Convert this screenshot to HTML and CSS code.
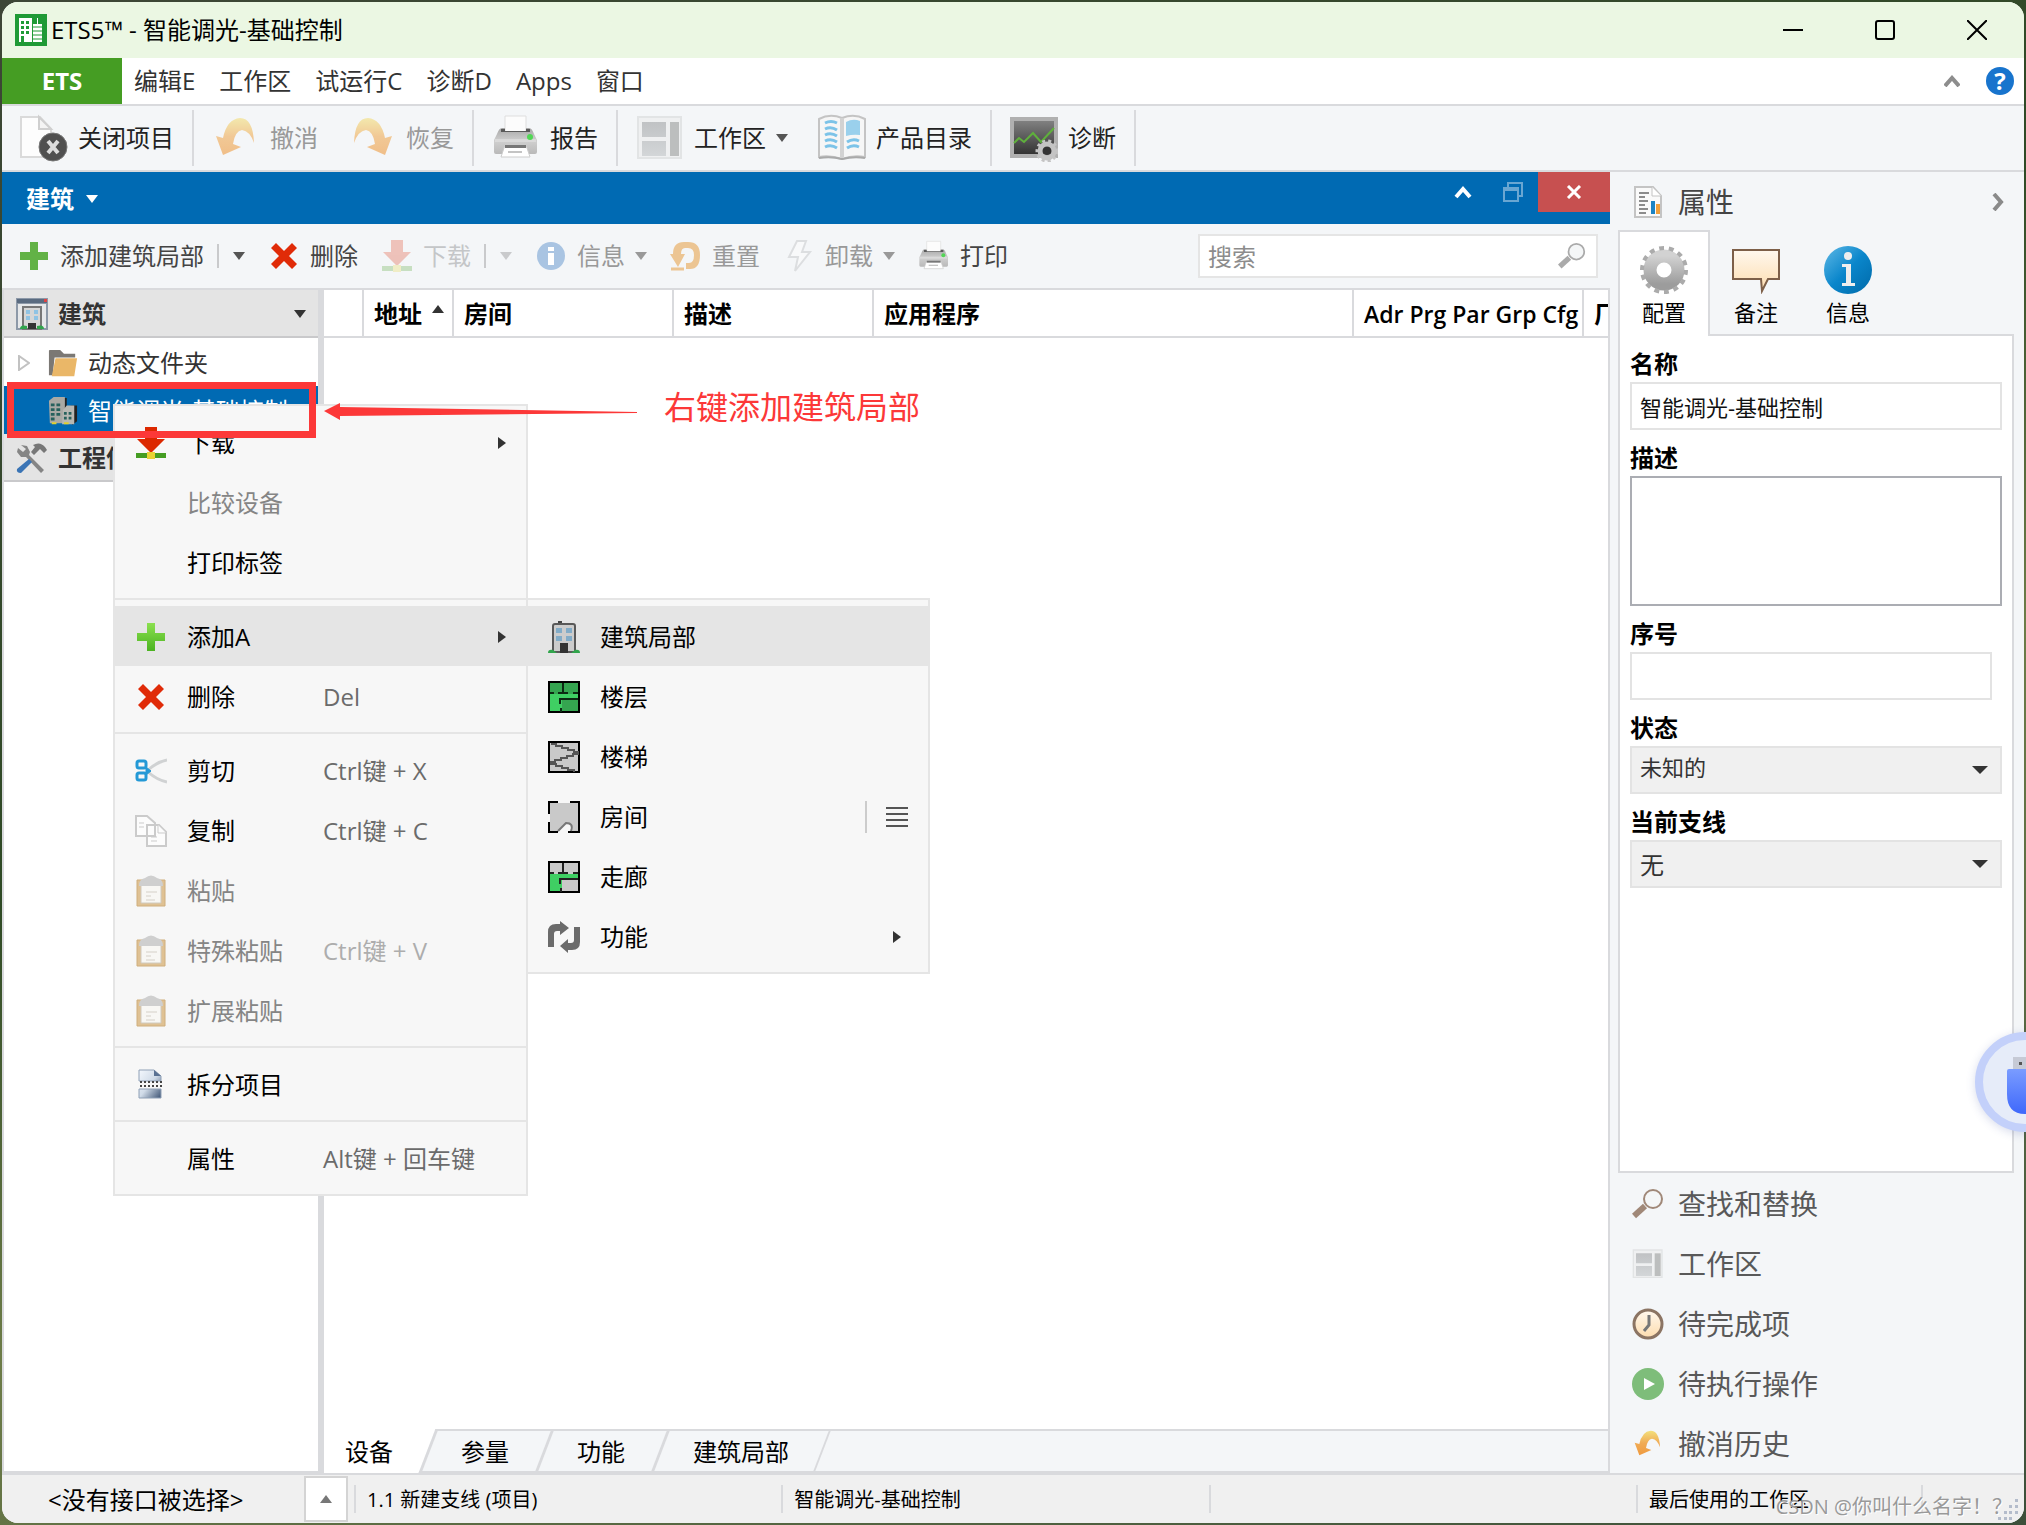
FILE: index.html
```html
<!DOCTYPE html>
<html lang="zh-CN">
<head>
    <meta charset="UTF-8">
    <meta name="viewport" content="width=device-width, initial-scale=1.0">
    <title>ETS5™ - 智能调光-基础控制</title>
    <link rel="stylesheet" href="styles.css">
</head>
<body>
    <!-- Shared icons -->
    <svg class="icon-defs" width="0" height="0" aria-hidden="true">
        <defs>
            <linearGradient id="g-orange" x1="0" y1="0" x2="0" y2="1"><stop offset="0" stop-color="#f3e07c"/><stop offset=".5" stop-color="#f0ab55"/><stop offset="1" stop-color="#ef9a3f"/></linearGradient>
            <linearGradient id="g-gray" x1="0" y1="0" x2="0" y2="1"><stop offset="0" stop-color="#d2d2d2"/><stop offset="1" stop-color="#9c9c9c"/></linearGradient>
            <linearGradient id="g-printer" x1="0" y1="0" x2="0" y2="1"><stop offset="0" stop-color="#a8a8a8"/><stop offset=".5" stop-color="#cfcfcf"/><stop offset="1" stop-color="#b9b9b9"/></linearGradient>
            <linearGradient id="g-pane" x1="0" y1="0" x2="0" y2="1"><stop offset="0" stop-color="#c0c2c4"/><stop offset="1" stop-color="#d3d6d8"/></linearGradient>
            <linearGradient id="g-blue" x1="0" y1="0" x2="1" y2="1"><stop offset="0" stop-color="#5fb9e6"/><stop offset=".5" stop-color="#0a86cb"/><stop offset="1" stop-color="#0069a8"/></linearGradient>
            <linearGradient id="g-peach" x1="0" y1="0" x2="0" y2="1"><stop offset="0" stop-color="#fff8ee"/><stop offset="1" stop-color="#fddcae"/></linearGradient>
            <linearGradient id="g-green" x1="0" y1="0" x2="0" y2="1"><stop offset="0" stop-color="#8be04f"/><stop offset="1" stop-color="#4bb321"/></linearGradient>
            <linearGradient id="g-dark" x1="0" y1="0" x2="0" y2="1"><stop offset="0" stop-color="#858585"/><stop offset="1" stop-color="#2f2f2f"/></linearGradient>
            <linearGradient id="g-split" x1="0" y1="0" x2="1" y2="1"><stop offset="0" stop-color="#f4f8fd"/><stop offset=".5" stop-color="#d0dbe8"/><stop offset="1" stop-color="#3d5373"/></linearGradient>
            <linearGradient id="g-usb" x1="0" y1="0" x2="0" y2="1"><stop offset="0" stop-color="#7a9cff"/><stop offset="1" stop-color="#3f68fb"/></linearGradient>
        </defs>
        <symbol id="i-down" viewBox="0 0 12 8"><path d="M0 0h12L6 8z"/></symbol>
        <symbol id="i-right" viewBox="0 0 8 12"><path d="M0 0v12l8-6z"/></symbol>
        <symbol id="i-undo" viewBox="0 0 48 48"><path d="M4 22l7 2Q15 5 28 4q13 0 14 25-4-12-12-13-7 1-9 14l8 3-18 8z" fill="url(#g-orange)"/></symbol>
        <symbol id="i-printer" viewBox="0 0 48 48">
            <path d="M13 2h21v18H13z" fill="#fcfcfc" stroke="#dedede"/>
            <path d="M10 14h3v4h21v-4h3q3 0 5 6l3 6v12q0 2-2 2H4q-2 0-2-2V26l3-6q2-6 5-6z" fill="url(#g-printer)"/>
            <path d="M9 15h4v2h21v-2h4v3H9z" fill="#5a5a5a"/>
            <path d="M3 25h41v3H3z" fill="#e3e3e3" opacity=".6"/>
            <circle cx="38" cy="23" r="3" fill="#52d656"/>
            <path d="M13 31h21l4 12H9z" fill="#fff" stroke="#ccc"/>
            <path d="M13 31h21v3H13z" fill="#777"/>
            <path d="M16 38h14" stroke="#c4c4c4" stroke-width="2"/>
        </symbol>
        <symbol id="i-workspace" viewBox="0 0 48 48">
            <path d="M2 3h43v41H2z" fill="#eff0f1" stroke="#e2e4e5" stroke-width="2"/>
            <path d="M6 8h24v15H6zM6 27h24v15H6z" fill="url(#g-pane)"/>
            <path d="M34 8h9v34h-9z" fill="#bcbebe"/>
        </symbol>
        <symbol id="i-delete" viewBox="0 0 32 32"><path d="M3 8l5-5 8 8 8-8 5 5-8 8 8 8-5 5-8-8-8 8-5-5 8-8z"/></symbol>
        <symbol id="i-plus" viewBox="0 0 32 32"><path d="M12 2h8v10h10v8H20v10h-8V20H2v-8h10z"/></symbol>
        <symbol id="i-download" viewBox="0 0 32 32">
            <path d="M10 0h12v12h8L16 26 2 12h8z" fill="#dc2800"/>
            <path d="M1 26h30v5H1z" fill="#459d23"/><path d="M12 25h8v7h-8z" fill="#e8d335"/>
        </symbol>
        <symbol id="i-glass" viewBox="0 0 32 32">
            <path d="M2 28l11-10" stroke="currentColor" stroke-width="6"/>
            <circle cx="21" cy="11" r="9" fill="#f4f6f7" stroke="currentColor" stroke-width="2"/>
        </symbol>
        <symbol id="i-house" viewBox="0 0 32 32">
            <path d="M10 0h4v3h-4z" fill="#444"/>
            <path d="M5 31V5q0-2 2-2h18q2 0 2 2v26z" fill="#ccc" stroke="#595959" stroke-width="2"/>
            <path d="M8 7h6v5H8zM18 7h6v5h-6zM8 15h6v5H8zM18 15h6v5h-6z" fill="#82acc8"/>
            <path d="M12 22h8v10h-8z" fill="#333"/>
            <path d="M0 32q0-4 5-3l4 3zM32 32q0-4-5-3l-4 3z" fill="#31a54c"/>
        </symbol>
        <symbol id="i-paste" viewBox="0 0 32 32">
            <path d="M2 5h28v26H2z" fill="#dfc193" stroke="#cfae7c"/>
            <path d="M6 9h20v19H6z" fill="#f8f7f4" stroke="#d0cabf"/>
            <path d="M4 11Q4 4 10 3q6-5 12 0 6 1 6 8z" fill="#cfcfcf"/>
            <path d="M11 17h11M11 21h5M11 25h9" stroke="#d5d0c8"/>
        </symbol>
    </svg>

    <div class="window">
        <header class="title-bar">
            <svg class="app-icon" viewBox="0 0 32 32">
                <path d="M0 0h32v32H0z" fill="#1f9a36"/>
                <path d="M4 4h13v24H4z" fill="#fff"/>
                <path d="M6 7h3v3H6zM11 7h3v3h-3zM6 12h3v3H6zM11 12h3v3h-3zM6 17h3v3H6zM11 17h3v3h-3zM6 22h3v6H6z" fill="#1f9a36"/>
                <path d="M22 4h1v6h4v18h-9V10h4z" fill="#fff"/>
                <path d="M18 13h10M18 17h10M18 21h10M18 25h10" stroke="#1f9a36"/>
            </svg>
            <h1 class="title">ETS5™ - 智能调光-基础控制</h1>
            <div class="window-buttons">
                <button aria-label="最小化"><svg width="20" height="20"><path d="M0 10h20" stroke="#000" stroke-width="2"/></svg></button>
                <button aria-label="最大化"><svg width="20" height="20"><rect x="1" y="1" width="18" height="18" rx="2" fill="none" stroke="#000" stroke-width="2"/></svg></button>
                <button aria-label="关闭"><svg width="20" height="20"><path d="M0 0l20 20M20 0L0 20" stroke="#000" stroke-width="2"/></svg></button>
            </div>
        </header>

        <nav class="menu-bar">
            <button class="ets-btn">ETS</button>
            <button>编辑E</button>
            <button>工作区</button>
            <button>试运行C</button>
            <button>诊断D</button>
            <button>Apps</button>
            <button>窗口</button>
            <div class="menu-right">
                <button aria-label="折叠"><svg width="16" height="12" viewBox="0 0 16 12"><path d="M1 11l7-8 7 8" fill="none" stroke="#8d8d8d" stroke-width="4"/></svg></button>
                <button class="help-btn">?</button>
            </div>
        </nav>

        <div class="ribbon">
            <div class="ribbon-group">
                <button>
                    <svg class="icon-lg" viewBox="0 0 48 48">
                        <path d="M1 3h19l11 12v28H1z" fill="#fdfdfd" stroke="#dadada" stroke-width="2"/>
                        <path d="M19 3v12h12z" fill="#f4f4f4" stroke="#cfcfcf" stroke-width="2"/>
                        <circle cx="33" cy="33" r="14" fill="#505050" stroke="#777"/>
                        <path d="M28 27l10 12M38 27L28 39" stroke="#ddd" stroke-width="4"/>
                    </svg>
                    关闭项目
                </button>
            </div>
            <div class="ribbon-group">
                <button disabled><svg class="icon-lg faded"><use href="#i-undo"/></svg>撤消</button>
                <button disabled><svg class="icon-lg faded flipped"><use href="#i-undo"/></svg>恢复</button>
            </div>
            <div class="ribbon-group">
                <button><svg class="icon-lg"><use href="#i-printer"/></svg>报告</button>
            </div>
            <div class="ribbon-group">
                <button><svg class="icon-lg"><use href="#i-workspace"/></svg>工作区<svg class="arrow"><use href="#i-down"/></svg></button>
                <button>
                    <svg class="icon-lg" viewBox="0 0 48 48">
                        <path d="M1 5Q12-1 24 4q12-5 23 1v38q-12-2-23 2-12-4-23-2z" fill="#f6f6f6" stroke="#c4c4c4" stroke-width="2"/>
                        <path d="M1 44q12-2 23 1 12-3 23-1" fill="none" stroke="#a9a9a9" stroke-width="2"/>
                        <path d="M24 4v40" stroke="#d2d2d2" stroke-width="4"/>
                        <path d="M7 9q6-3 12 0M7 15q6-3 12 1M7 21q6-3 12 1M7 27q6-3 12 1M7 33q6-3 12 1M29 28q6-4 12-1M29 34q6-4 12-1" fill="none" stroke="#7cc3e8" stroke-width="3"/>
                        <path d="M28 8q7-4 14-1v14q-7-1-14 1z" fill="#9ad0ec"/>
                    </svg>
                    产品目录
                </button>
            </div>
            <div class="ribbon-group">
                <button>
                    <svg class="icon-lg" viewBox="0 0 48 48">
                        <path d="M2 5h44v37H2z" fill="url(#g-dark)" stroke="#b0b0b0" stroke-width="4"/>
                        <path d="M4 29l5-5 5 4 9-9 8 9 13-14" fill="none" stroke="#5fb03c" stroke-width="2"/>
                        <circle cx="37" cy="37" r="7" fill="none" stroke="#c4c4c4" stroke-width="5"/>
                        <circle cx="37" cy="37" r="10" fill="none" stroke="#c4c4c4" stroke-width="3" stroke-dasharray="3 3"/>
                        <circle cx="37" cy="37" r="4" fill="#333"/>
                    </svg>
                    诊断
                </button>
            </div>
        </div>

        <div class="workspace">
            <main class="main-panel">
                <div class="panel-title">
                    <button class="panel-name">建筑<svg class="arrow"><use href="#i-down"/></svg></button>
                    <div class="panel-buttons">
                        <button aria-label="折叠"><svg width="18" height="14" viewBox="0 0 18 14"><path d="M2 12l7-8 7 8" fill="none" stroke="#fff" stroke-width="4"/></svg></button>
                        <button aria-label="还原"><svg width="20" height="20" viewBox="0 0 20 20" fill="none" stroke="#69a6d2" stroke-width="2"><path d="M1 6h14v13H1zM1 8h14M5 5V1h14v13h-4"/></svg></button>
                        <button class="panel-close" aria-label="关闭面板"><svg width="16" height="14" viewBox="0 0 16 14"><path d="M2 1l12 12M14 1L2 13" stroke="#fff" stroke-width="3"/></svg></button>
                    </div>
                </div>

                <div class="tool-bar">
                    <button><svg class="icon fill-green"><use href="#i-plus"/></svg>添加建筑局部<span class="split"></span><svg class="arrow"><use href="#i-down"/></svg></button>
                    <button><svg class="icon fill-red"><use href="#i-delete"/></svg>删除</button>
                    <button class="lighter" disabled><svg class="icon"><use href="#i-download"/></svg>下载<span class="split"></span><svg class="arrow"><use href="#i-down"/></svg></button>
                    <button disabled>
                        <svg class="icon" viewBox="0 0 32 32"><circle cx="16" cy="16" r="14" fill="#a9c4e2"/><path d="M13 7h6v4h-6zM13 13h6v12h-6z" fill="#fff"/></svg>
                        信息<svg class="arrow"><use href="#i-down"/></svg>
                    </button>
                    <button disabled>
                        <svg class="icon" viewBox="0 0 32 32"><path d="M3 14Q3 2 14 2h4q12 0 12 13 0 14-10 14h-4v-6h3q5 0 5-8 0-7-6-7h-3q-4 0-4 6h4L8 27 0 14z" fill="#ecc593"/><path d="M1 29h13" stroke="#ecc593" stroke-width="3"/></svg>
                        重置
                    </button>
                    <button disabled>
                        <svg class="icon" viewBox="0 0 32 32"><path d="M14 1h9l-4 11h8L12 31l3-14H6z" fill="#f8f9fa" stroke="#dcdee0" stroke-width="2"/></svg>
                        卸载<svg class="arrow"><use href="#i-down"/></svg>
                    </button>
                    <button><svg class="icon"><use href="#i-printer"/></svg>打印</button>
                    <div class="search">
                        <input type="search" placeholder="搜索" aria-label="搜索">
                        <svg class="search-icon"><use href="#i-glass"/></svg>
                    </div>
                </div>

                <div class="panel-body">
                    <aside class="tree">
                        <div class="tree-row tree-head">
                            <svg class="icon" viewBox="0 0 32 32">
                                <path d="M0 0h32v32H0z" fill="#8d99a8"/><path d="M2 6h28v24H2z" fill="#e6e8ea"/>
                                <path d="M1 1h30v4H1z" fill="#5a6b80"/><path d="M28 1h3v3h-3z" fill="#d44"/>
                                <path d="M7 31V9h18v22z" fill="#d6d6d6" stroke="#777" stroke-width="2"/>
                                <path d="M10 12h4v4h-4zM18 12h4v4h-4zM10 18h4v4h-4zM18 18h4v4h-4z" fill="#8fc3e4"/>
                                <path d="M12 25h8v6h-8z" fill="#333"/><path d="M4 31q0-5 7-3v3zM28 31q0-5-7-3v3z" fill="#31a54c"/>
                            </svg>
                            建筑
                            <svg class="arrow"><use href="#i-down"/></svg>
                        </div>
                        <div class="tree-row tree-item">
                            <svg class="expander" viewBox="0 0 12 16"><path d="M1 1v14l10-7z" fill="none" stroke="#c2c2c2" stroke-width="2"/></svg>
                            <svg class="icon" viewBox="0 0 32 32"><path d="M1 29V3q0-1 1-1h11l4 4h12v4H7L5 29z" fill="#7b7874"/><path d="M8 11h23l-3 19H4z" fill="#eab768"/></svg>
                            动态文件夹
                        </div>
                        <div class="tree-row tree-item selected">
                            <span class="expander"></span>
                            <svg class="icon" viewBox="0 0 32 32">
                                <path d="M14 2h6v26h-6zM24 10h7v17l-5 4z" fill="#222"/>
                                <path d="M1 5l5-4h12v28H2z" fill="#a9a9a4"/><path d="M16 15l4-5h8v20H15z" fill="#b8b8b3"/>
                                <path d="M3 8h4v3H3zM9 8h4v3H9zM3 13h4v3H3zM9 13h4v3H9zM3 18h4v3H3zM9 18h4v3H9zM3 23h4v3H3zM17 17h3v3h-3zM22 17h3v3h-3zM17 22h3v3h-3zM22 22h3v3h-3z" fill="#27615c"/>
                                <path d="M4 28h5v2H4zM17 28h5v2h-5z" fill="#e0cf2f"/>
                            </svg>
                            智能调光-基础控制
                        </div>
                        <div class="tree-row tree-head">
                            <svg class="icon" viewBox="0 0 32 32">
                                <path d="M5 3l6 1 3 6-1 3 15 15-3 3L10 15l-5 0-4-5 1-4 5 4 3-3z" fill="#858585"/>
                                <path d="M17 3q7-4 12 2l2 3-3 3-4-4-6 6-3-3 4-5z" fill="#777"/>
                                <path d="M13 17l3 3L5 31q-5 0-4-4z" fill="#3a74b5"/>
                            </svg>
                            工程信息
                        </div>
                    </aside>

                    <section class="content">
                        <div class="table-wrap">
                            <table class="device-table">
                                <colgroup>
                                    <col class="c-mark"><col class="c-address"><col class="c-room"><col class="c-desc"><col class="c-app"><col class="c-flags"><col>
                                </colgroup>
                                <thead>
                                    <tr>
                                        <th></th>
                                        <th>地址<svg class="sort" viewBox="0 0 12 8"><path d="M0 8h12L6 0z"/></svg></th>
                                        <th>房间</th>
                                        <th>描述</th>
                                        <th>应用程序</th>
                                        <th class="flags">Adr Prg Par Grp Cfg</th>
                                        <th>厂商</th>
                                    </tr>
                                </thead>
                            </table>
                        </div>
                        <div class="sheet-tabs">
                            <button class="active">设备</button>
                            <button>参量</button>
                            <button>功能</button>
                            <button>建筑局部</button>
                        </div>
                    </section>
                </div>
            </main>

            <aside class="side-panel">
                <div class="side-title">
                    <svg class="icon" viewBox="0 0 32 32">
                        <path d="M3 1h18l8 9v21H3z" fill="#fafafa" stroke="#c4c4c4" stroke-width="2"/><path d="M20 1v9h9" fill="#fff" stroke="#c4c4c4"/>
                        <path d="M7 7h10M7 11h6M7 15h9M7 19h6M7 23h9M7 27h7" stroke="#8c8c8c" stroke-width="2"/>
                        <path d="M19 15h4v13h-4z" fill="#1c84c4"/><path d="M24 18h4v10h-4z" fill="#f0a03c"/>
                    </svg>
                    <h2>属性</h2>
                    <svg class="chevron" viewBox="0 0 12 18"><path d="M2 1l7 8-7 8" fill="none" stroke="#8a8a8a" stroke-width="4"/></svg>
                </div>

                <div class="prop-tabs">
                    <button class="active">
                        <svg class="icon-lg" viewBox="0 0 48 48">
                            <circle cx="24" cy="24" r="14" fill="none" stroke="url(#g-gray)" stroke-width="13"/>
                            <circle cx="24" cy="24" r="22" fill="none" stroke="#ababab" stroke-width="4" stroke-dasharray="5 5" pathLength="140"/>
                        </svg>
                        配置
                    </button>
                    <button>
                        <svg class="icon-lg" viewBox="0 0 48 48"><path d="M1 4h46v29H36l-6 12-1-12H1z" fill="url(#g-peach)" stroke="#7d5f48" stroke-width="2"/></svg>
                        备注
                    </button>
                    <button>
                        <svg class="icon-lg" viewBox="0 0 48 48">
                            <circle cx="24" cy="24" r="24" fill="url(#g-blue)"/>
                            <circle cx="24" cy="10" r="4" fill="#eee"/><path d="M18 18h9v19h4v3H18v-3h4V21h-4z" fill="#eee"/>
                        </svg>
                        信息
                    </button>
                </div>

                <form class="prop-form">
                    <label for="name">名称</label>
                    <input id="name" type="text" value="智能调光-基础控制">
                    <label for="desc">描述</label>
                    <textarea id="desc"></textarea>
                    <label for="number">序号</label>
                    <input id="number" class="number" type="text">
                    <label for="state">状态</label>
                    <div class="select-box">
                        <select id="state" class="state-select"><option>未知的</option></select>
                        <svg class="select-arrow" viewBox="0 0 16 8"><path d="M0 0h16L8 8z"/></svg>
                    </div>
                    <label for="line">当前支线</label>
                    <div class="select-box">
                        <select id="line" class="line-select"><option>无</option></select>
                        <svg class="select-arrow" viewBox="0 0 16 8"><path d="M0 0h16L8 8z"/></svg>
                    </div>
                </form>

                <nav class="side-links">
                    <a href="#"><svg class="icon glass-brown"><use href="#i-glass"/></svg>查找和替换</a>
                    <a href="#"><svg class="icon"><use href="#i-workspace"/></svg>工作区</a>
                    <a href="#"><svg class="icon" viewBox="0 0 32 32"><circle cx="16" cy="16" r="14" fill="url(#g-peach)" stroke="#8b7463" stroke-width="3"/><path d="M17 7v10l-5 6" fill="none" stroke="#777" stroke-width="3"/></svg>待完成项</a>
                    <a href="#"><svg class="icon" viewBox="0 0 32 32"><circle cx="16" cy="16" r="16" fill="#7ebd7a"/><path d="M12 10v12l11-6z" fill="#fff"/></svg>待执行操作</a>
                    <a href="#"><svg class="icon"><use href="#i-undo"/></svg>撤消历史</a>
                </nav>
            </aside>
        </div>

        <footer class="status-bar">
            <span class="interface">&lt;没有接口被选择&gt;</span>
            <button class="status-up" aria-label="选择接口"><svg width="12" height="8" viewBox="0 0 12 8"><path d="M0 8h12L6 0z" fill="#777"/></svg></button>
            <span class="cell line-cell">1.1 新建支线 (项目)</span>
            <span class="cell project-cell">智能调光-基础控制</span>
            <span class="cell empty-cell"></span>
            <span class="cell recent-cell">最后使用的工作区</span>
            <span class="cell last-cell"></span>
            <svg class="grip" width="22" height="22" viewBox="0 0 22 22"><path d="M17 0h3v3h-3zM11 6h3v3h-3zM17 6h3v3h-3zM6 12h3v3H6zM11 12h3v3h-3zM17 12h3v3h-3zM0 18h3v3H0zM6 18h3v3H6zM11 18h3v3h-3z" fill="#b4bccb"/></svg>
        </footer>
    </div>

    <!-- Context menu -->
    <ul class="menu context-menu">
        <li><button><svg class="icon"><use href="#i-download"/></svg><span class="label">下载</span><span class="aux"><svg class="more"><use href="#i-right"/></svg></span></button></li>
        <li><button disabled><span class="icon"></span><span class="label">比较设备</span></button></li>
        <li><button><span class="icon"></span><span class="label">打印标签</span></button></li>
        <li class="sep"></li>
        <li class="open">
            <button><svg class="icon fill-lime"><use href="#i-plus"/></svg><span class="label">添加A</span><span class="aux"><svg class="more"><use href="#i-right"/></svg></span></button>
            <ul class="menu sub-menu">
                <li class="open"><button><svg class="icon"><use href="#i-house"/></svg><span class="label">建筑局部</span></button></li>
                <li><button>
                    <svg class="icon" viewBox="0 0 32 32">
                        <path d="M1 1h30v30H1z" fill="#35a550" stroke="#000" stroke-width="2"/><path d="M2 13h28v4H14v13H2z" fill="#3fcf63"/>
                        <path d="M15 2v10M2 12h4M10 12h10M25 12h5M30 18H12v5M13 27v4" fill="none" stroke="#0c2a13" stroke-width="2"/>
                    </svg>
                    <span class="label">楼层</span></button></li>
                <li><button>
                    <svg class="icon" viewBox="0 0 32 32">
                        <path d="M1 1h30v30H1z" fill="#c9c9c9" stroke="#000" stroke-width="2"/>
                        <path d="M3 3h5v2h6v2h6v2h6v2h4v2h-5v2h-6v2h-6v2H7v2H3v2h5v2h6v2h6v2h6v2" fill="none" stroke="#555" stroke-width="2"/>
                    </svg>
                    <span class="label">楼梯</span></button></li>
                <li><button>
                    <svg class="icon" viewBox="0 0 32 32">
                        <path d="M2 2h28v28h-6q2-9-6-8l-7 8H2z" fill="#c9c9c9"/>
                        <path d="M1 13V1h9M22 1h9v30H20M1 21v10h9" fill="none" stroke="#000" stroke-width="2"/><path d="M10 30l8-8q8 0 5 8" fill="none" stroke="#777" stroke-width="2"/>
                    </svg>
                    <span class="label">房间</span>
                    <span class="aux aux-line"><svg width="22" height="20" viewBox="0 0 22 20"><path d="M0 1h22M0 7h22M0 13h22M0 19h22" stroke="#555" stroke-width="2"/></svg></span></button></li>
                <li><button>
                    <svg class="icon" viewBox="0 0 32 32">
                        <path d="M1 1h30v30H1z" fill="#c9c9c9" stroke="#000" stroke-width="2"/><path d="M2 13h28v4H14v13H2z" fill="#3fcf63"/>
                        <path d="M15 2v10M2 12h4M10 12h10M25 12h5M30 18H12v5M13 27v4" fill="none" stroke="#222" stroke-width="2"/>
                    </svg>
                    <span class="label">走廊</span></button></li>
                <li><button>
                    <svg class="icon" viewBox="0 0 32 32" fill="#6b6b6b"><path d="M0 26V11q0-8 8-8h4V0l9 7-9 7v-4H9q-3 0-3 3v13zM32 6v15q0 8-8 8h-4v3l-8-7 8-7v4h3q3 0 3-3V6z"/></svg>
                    <span class="label">功能</span><span class="aux"><svg class="more"><use href="#i-right"/></svg></span></button></li>
            </ul>
        </li>
        <li><button><svg class="icon fill-red"><use href="#i-delete"/></svg><span class="label">删除</span><kbd>Del</kbd></button></li>
        <li class="sep"></li>
        <li><button>
            <svg class="icon" viewBox="0 0 32 32" fill="none">
                <path d="M13 15Q22 7 32 5M13 17q9 8 19 10" stroke="#d0d2d3" stroke-width="3"/>
                <rect x="2" y="6" width="9" height="7" rx="2" stroke="#2499d6" stroke-width="3"/><rect x="2" y="18" width="9" height="7" rx="2" stroke="#2499d6" stroke-width="3"/><path d="M11 12l5 4-5 4z" fill="#2499d6" stroke="#2499d6"/>
            </svg>
            <span class="label">剪切</span><kbd>Ctrl键 + X</kbd></button></li>
        <li><button>
            <svg class="icon" viewBox="0 0 32 32" fill="#fcfcfc" stroke="#cbcbcb" stroke-width="2"><path d="M1 1h11l8 7v13H1zM12 10h12l7 7v14H12z"/><path d="M23 10v8h8M4 8h5M4 12h5M16 22h6M16 26h6" stroke-width="1"/></svg>
            <span class="label">复制</span><kbd>Ctrl键 + C</kbd></button></li>
        <li><button disabled><svg class="icon"><use href="#i-paste"/></svg><span class="label">粘贴</span></button></li>
        <li><button disabled><svg class="icon"><use href="#i-paste"/></svg><span class="label">特殊粘贴</span><kbd>Ctrl键 + V</kbd></button></li>
        <li><button disabled><svg class="icon"><use href="#i-paste"/></svg><span class="label">扩展粘贴</span></button></li>
        <li class="sep"></li>
        <li><button>
            <svg class="icon" viewBox="0 0 32 32"><path d="M4 1h15l7 6v5H4zM4 20h22v9H4z" fill="url(#g-split)" stroke="#8fa0b6"/><path d="M19 1v6h7z" fill="#5a7192"/><path d="M5 13h22M5 17h22" stroke="#444" stroke-width="2" stroke-dasharray="2 2"/></svg>
            <span class="label">拆分项目</span></button></li>
        <li class="sep"></li>
        <li><button><span class="icon"></span><span class="label">属性</span><kbd>Alt键 + 回车键</kbd></button></li>
    </ul>

    <!-- Annotation -->
    <div class="mark-box"></div>
    <svg class="mark-arrow" width="314" height="18" viewBox="0 0 314 18"><path d="M0 9L16 1v4l297 5v1l-297 3v4z" fill="#fc3838"/></svg>
    <p class="mark-text">右键添加建筑局部</p>

    <button class="usb-ball" aria-label="USB">
        <svg width="60" height="84" viewBox="0 0 60 84">
            <path d="M36 17h24v13H36z" fill="#c6cad6"/><path d="M42 22h3v3h-3z" fill="#555"/>
            <path d="M28 29h32v45H48q-18 0-18-20V31q0-2 2-2z" fill="url(#g-usb)"/>
        </svg>
    </button>
    <p class="watermark">CSDN @你叫什么名字！？</p>
</body>
</html>
```
FILE: styles.css
```css
* { box-sizing: border-box; margin: 0; padding: 0; }
body { font-family: "Open Sans", "Noto Sans CJK SC", sans-serif; font-size: 24px; line-height: 32px; color: #222; height: 100vh; padding: 2px; overflow: hidden; position: relative; background: linear-gradient(160deg, #3d4636, #2f4a25 40%, #6d7c48 60%, #3c4f3a); }
button { font: inherit; color: inherit; background: none; border: none; display: flex; align-items: center; white-space: nowrap; }
input, textarea, select { font: inherit; color: #111; }
a { color: inherit; text-decoration: none; }
ul { list-style: none; }

/* icons */
.icon-defs { position: absolute; }
.icon { width: 32px; height: 32px; flex: none; }
.icon-lg { width: 48px; height: 48px; flex: none; }
.arrow { width: 12px; height: 8px; flex: none; fill: #555; }
.faded { opacity: 0.6; }
.flipped { transform: scaleX(-1); }
.fill-green { fill: #62b246; }
.fill-lime { fill: url(#g-green); }
.fill-red { fill: #e02b08; }

.window { height: 100%; display: flex; flex-direction: column; background: #f4f6f8; border-radius: 16px; overflow: hidden; }

/* title and menu */
.title-bar { height: 56px; flex: none; display: flex; align-items: center; padding-left: 13px; background: #ebf7e3; color: #000; }
.app-icon { width: 32px; height: 32px; margin-right: 4px; }
.title { font-size: 24px; font-weight: 400; }
.window-buttons { margin-left: auto; display: flex; align-self: stretch; padding-right: 1px; }
.window-buttons button { width: 92px; justify-content: center; }
.menu-bar { height: 48px; flex: none; display: flex; align-items: stretch; background: #fff; border-bottom: 2px solid #d9dadd; color: #333; }
.menu-bar button { padding: 0 12px; }
.menu-bar .ets-btn { width: 120px; justify-content: center; background: #459d23; color: #fff; font-weight: 700; }
.menu-right { margin-left: auto; display: flex; align-items: center; padding-right: 10px; }
.menu-bar .help-btn { width: 28px; height: 28px; padding: 0; margin-left: 14px; justify-content: center; border-radius: 50%; background: #1874cd; color: #fff; font-weight: 700; }

/* ribbon */
.ribbon { height: 66px; flex: none; display: flex; align-items: center; border-bottom: 2px solid #d9dadd; }
.ribbon-group { height: 56px; display: flex; align-items: center; gap: 30px; padding: 0 18px; border-right: 2px solid #d9dadd; }
.ribbon button { gap: 10px; }
.ribbon button:disabled { color: #999; }

.workspace { flex: 1; min-height: 0; display: flex; }
.main-panel { flex: 1; min-width: 0; display: flex; flex-direction: column; }

.panel-title { height: 52px; flex: none; display: flex; background: #006ab3; color: #fff; }
.panel-name { padding: 2px 0 0 24px; gap: 11px; font-weight: 700; }
.panel-name .arrow { fill: #fff; width: 14px; }
.panel-buttons { margin-left: auto; display: flex; align-items: flex-start; }
.panel-buttons button { width: 50px; height: 40px; justify-content: center; }
.panel-buttons .panel-close { width: 72px; background: #c75050; }

.tool-bar { height: 66px; flex: none; display: flex; align-items: center; gap: 23px; padding: 0 12px 0 16px; border-bottom: 2px solid #d9dadd; color: #444; }
.tool-bar button { gap: 10px; }
.tool-bar button:disabled { color: #999; }
.tool-bar button:disabled .arrow { fill: #999; }
.tool-bar .lighter:disabled { color: #c4c6c8; }
.tool-bar .lighter:disabled .arrow { fill: #c9cacc; }
.lighter .icon { opacity: 0.25; }
.split { width: 2px; height: 24px; margin: 0 4px 0 3px; background: #c9cacc; }
.search { position: relative; width: 400px; height: 44px; margin-left: auto; }
.search input { width: 100%; height: 100%; padding: 0 48px 0 8px; border: 2px solid #e5e5e5; background: #fff; }
.search input::placeholder { color: #8c8c8c; opacity: 1; }
.search-icon { position: absolute; right: 12px; top: 8px; width: 28px; height: 28px; color: #aaa; }

/* building tree */
.panel-body { flex: 1; min-height: 0; display: flex; border-right: 2px solid #d9dadd; }
.tree { width: 322px; flex: none; background: #fff; border-left: 2px solid #d9dadd; border-right: 6px solid #d9dadd; border-bottom: 2px solid #d9dadd; }
.tree-row { height: 48px; display: flex; align-items: center; gap: 10px; padding: 2px 12px 0; white-space: nowrap; overflow: hidden; color: #333; }
.tree-head { background: #e4e4e4; border-bottom: 2px solid #c9c9cb; font-weight: 700; }
.tree-head .arrow { margin-left: auto; fill: #333; }
.tree-item { padding-left: 14px; }
.tree-item .icon { width: 30px; height: 30px; }
.expander { width: 12px; height: 16px; margin-right: 8px; }
.selected { background: #006ab3; color: #fff; }

/* device list */
.content { flex: 1; min-width: 0; display: flex; flex-direction: column; background: #fff; }
.table-wrap { flex: 1; overflow: hidden; }
.device-table { width: 100%; table-layout: fixed; border-collapse: separate; border-spacing: 0; border-bottom: 2px solid #d9dadd; }
.device-table th { height: 46px; padding: 2px 0 0 10px; text-align: left; white-space: nowrap; overflow: hidden; border-right: 2px solid #d9dadd; color: #000; }
.device-table th:last-child { border-right: none; }
.device-table .flags { font-weight: 600; font-size: 23px; }
.c-mark { width: 40px; }
.c-address { width: 90px; }
.c-room { width: 220px; }
.c-desc { width: 200px; }
.c-app { width: 480px; }
.c-flags { width: 230px; }
.sort { width: 12px; height: 8px; margin: 0 0 10px 10px; fill: #333; }

.sheet-tabs { height: 44px; flex: none; display: flex; overflow: hidden; position: relative; background: #f4f6f8; box-shadow: inset 0 2px #d9dadd, inset 0 -2px #d9dadd; color: #000; }
.sheet-tabs button { position: relative; z-index: 0; padding: 2px 34px 0; }
.sheet-tabs button::before { content: ""; position: absolute; z-index: -1; inset: 0; transform: skewX(-21deg); border-left: 3px solid #d9dadd; }
.sheet-tabs button:last-child::before { border-right: 2px solid #d9dadd; }
.sheet-tabs .active { padding-left: 21px; }
.sheet-tabs .active::before { left: -20px; background: #fff; border: none; }

/* properties */
.side-panel { width: 414px; flex: none; display: flex; flex-direction: column; padding: 0 10px 0 8px; }
.side-title { height: 58px; flex: none; display: flex; align-items: center; padding: 2px 10px 0 14px; color: #444; }
.side-title h2 { margin-left: 14px; font-size: 28px; font-weight: 400; }
.chevron { width: 12px; height: 18px; margin-left: auto; }
.prop-tabs { display: flex; position: relative; height: 106px; flex: none; margin-bottom: -2px; color: #000; font-size: 22px; }
.prop-tabs button { width: 92px; flex-direction: column; padding-top: 16px; line-height: 36px; }
.prop-tabs .active { padding-top: 14px; background: #fff; border: 2px solid #d9dadd; border-bottom: none; }
.prop-form { flex: 1; padding: 0 10px; border: 2px solid #d9dadd; background: #fff; }
.prop-form label { display: block; padding-top: 10px; line-height: 36px; font-weight: 700; color: #000; }
.prop-form input, .prop-form textarea, .prop-form select { display: block; width: 100%; height: 48px; padding: 0 8px; border: 2px solid #e3e3e3; border-radius: 0; background: #fff; font-size: 22px; }
.prop-form textarea { height: 130px; resize: none; border-color: #abadb3; }
.prop-form .number { width: calc(100% - 10px); }
.prop-form select { appearance: none; background: #f0f0f0; color: #333; }
.prop-form .state-select { padding-bottom: 6px; }
.prop-form .line-select { font-size: 24px; padding-top: 2px; }
.select-box { position: relative; }
.select-arrow { position: absolute; right: 14px; top: 20px; width: 16px; height: 8px; fill: #333; pointer-events: none; }
.side-links { flex: none; font-size: 28px; color: #595959; }
.side-links a { display: flex; align-items: center; gap: 14px; height: 60px; padding: 2px 0 0 14px; }
.glass-brown { color: #a08878; }

/* status bar */
.status-bar { height: 50px; flex: none; display: flex; align-items: center; position: relative; border-top: 2px solid #d9dadd; background: #f0f0f0; color: #000; font-size: 20px; white-space: nowrap; }
.interface { width: 302px; padding: 2px 0 0 46px; font-size: 24px; }
.status-up { width: 44px; height: 46px; margin-right: 6px; justify-content: center; border: 2px solid #d4d4d4; background: #fff; }
.cell { height: 28px; padding-left: 11px; border-left: 2px solid #d9dadd; line-height: 30px; }
.line-cell, .project-cell, .empty-cell { flex: 1; }
.recent-cell { width: 285px; }
.last-cell { width: 103px; }
.grip { position: absolute; right: 4px; bottom: 2px; }

/* context menu */
.menu { position: absolute; border: 2px solid #e5e5e5; background: #f7f7f7; padding: 6px 0; color: #000; }
.context-menu { left: 113px; top: 404px; width: 415px; }
.menu li { position: relative; }
.menu button { width: 100%; height: 60px; padding: 1px 13px 0 20px; }
.menu button:disabled { color: #858585; }
.menu button:disabled kbd { color: #adadad; }
.menu .sep { height: 2px; margin: 6px 0; background: #e5e5e5; }
.menu .open > button { background: #e5e5e5; }
.menu .label { width: 136px; margin-left: 20px; text-align: left; }
.menu kbd { font: inherit; color: #6b6b6b; }
.aux { width: 22px; margin-left: auto; display: flex; justify-content: center; }
.more { width: 8px; height: 12px; fill: #333; }
.sub-menu { left: 100%; top: -8px; width: 404px; }
.sub-menu button { padding-right: 20px; }
.aux-line { width: 43px; height: 32px; align-items: center; justify-content: flex-end; border-left: 2px solid #ccc; }

/* overlays */
.mark-box { position: absolute; left: 7px; top: 382px; width: 309px; height: 56px; border: 7px solid #fc3838; }
.mark-arrow { position: absolute; left: 324px; top: 402px; }
.mark-text { position: absolute; left: 664px; top: 387px; font-size: 32px; line-height: 40px; color: #fc3838; }
.usb-ball { position: absolute; right: -49px; top: 1032px; width: 100px; height: 100px; border-radius: 50%; border: 8px solid #c3d0fa; background: #e6ecf9; box-shadow: 0 2px 10px rgba(60, 80, 160, 0.2); }
.usb-ball svg { position: absolute; left: -6px; top: 0; }
.watermark { position: absolute; right: 14px; bottom: 2px; font-size: 20px; color: #999; text-shadow: 1px 1px #fff; }
```
